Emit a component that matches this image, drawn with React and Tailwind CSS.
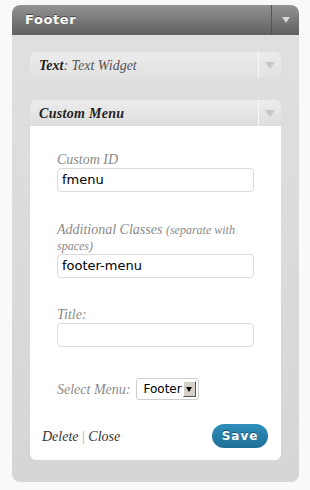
import React from "react";

function Arrow({ color = "#c7c7c7", size = 5 }) {
  return (
    <div
      className="w-0 h-0"
      style={{
        borderLeft: `${size}px solid transparent`,
        borderRight: `${size}px solid transparent`,
        borderTop: `${size + 2}px solid ${color}`,
      }}
    />
  );
}

function Field({ label, value }) {
  return (
    <div>
      <div className="leading-[16px] italic text-[#8a8a8a] font-['Liberation_Serif',serif] text-[14px]">
        {label}
      </div>
      <div className="h-[24px] border border-[#dcdcdc] rounded-[4px] bg-white px-[4px] flex items-center text-[13px] text-black font-['DejaVu_Sans',sans-serif]">
        {value}
      </div>
    </div>
  );
}

export default function App() {
  return (
    <div className="min-h-screen bg-[#f9f9f9] pt-[5px] pl-[12px]">
      <div className="w-[287px] rounded-[8px] bg-gradient-to-b from-[#e0e0e0] to-[#d6d6d6] overflow-hidden">
        {/* header */}
        <div className="h-[30px] flex bg-gradient-to-b from-[#939393] to-[#606060] rounded-t-[8px]">
          <div
            className="flex-1 flex items-center pl-[13px] text-white font-bold text-[13px] tracking-[0.6px] font-['DejaVu_Sans',sans-serif]"
            style={{ textShadow: "0 -1px 0 #444" }}
          >
            Footer
          </div>
          <div className="w-[28px] border-l border-[#555] flex items-center justify-center">
            <Arrow color="#d8d8d8" size={4} />
          </div>
        </div>

        <div className="px-[18px] pt-[17px] pb-[22px] flex flex-col gap-[22px]">
          {/* Text widget */}
          <div className="h-[26px] rounded-[6px] bg-gradient-to-b from-[#ececec] to-[#e1e1e1] flex">
            <div className="flex-1 flex items-center pl-[9px] italic text-[14px] font-['Liberation_Serif',serif]">
              <b className="text-[#222]">Text</b>
              <span className="text-[#555]">: Text Widget</span>
            </div>
            <div className="w-[23px] border-l border-[#f8f8f8] flex items-center justify-center">
              <Arrow />
            </div>
          </div>

          {/* Custom Menu widget */}
          <div className="rounded-[6px] overflow-hidden">
            <div className="h-[26px] bg-gradient-to-b from-[#ececec] to-[#dedede] flex">
              <div className="flex-1 flex items-center pl-[9px] font-bold italic text-[#222] text-[14px] tracking-[0.3px] font-['Liberation_Serif',serif]">
                Custom Menu
              </div>
              <div className="w-[23px] border-l border-[#f8f8f8] flex items-center justify-center">
                <Arrow />
              </div>
            </div>
            <div className="bg-white h-[334px] flex flex-col">
              <div className="px-[27px] pt-[26px]">
                <Field label="Custom ID" value="fmenu" />
                <div className="mt-[30px]">
                  <Field
                    label={
                      <>
                        <div>
                          Additional Classes <span className="text-[12px]">(separate with</span>
                        </div>
                        <div className="text-[12px]">spaces)</div>
                      </>
                    }
                    value="footer-menu"
                  />
                </div>
                <div className="mt-[29px]">
                  <Field label="Title:" value="" />
                </div>
                <div className="mt-[31px] flex items-center gap-[6px]">
                  <span className="italic text-[#8a8a8a] text-[14px] font-['Liberation_Serif',serif]">
                    Select Menu:
                  </span>
                  <div className="h-[22px] border border-[#cfcfcf] rounded-[3px] flex items-center pl-[6px] pr-[2px] text-[12px] font-['DejaVu_Sans',sans-serif]">
                    Footer
                    <div className="ml-[1px] w-[13px] h-[16px] bg-[#d4d0c8] border border-[#fff] border-r-[#555] border-b-[#555] flex items-center justify-center">
                      <Arrow color="#000" size={3} />
                    </div>
                  </div>
                </div>
              </div>
              <div className="mt-auto mb-[12px] pl-[12px] pr-[13px] flex items-center justify-between">
                <div className="italic text-[#333] text-[14px] font-['Liberation_Serif',serif]">
                  Delete <span className="not-italic text-[#aaa]">|</span> Close
                </div>
                <div
                  className="w-[56px] h-[24px] rounded-full bg-gradient-to-b from-[#2e8fbc] to-[#1f6f96] flex items-center justify-center text-white font-bold text-[12px] tracking-[1px] font-['DejaVu_Sans',sans-serif]"
                  style={{ textShadow: "0 -1px 0 #145577" }}
                >
                  Save
                </div>
              </div>
            </div>
          </div>
        </div>
      </div>
    </div>
  );
}
